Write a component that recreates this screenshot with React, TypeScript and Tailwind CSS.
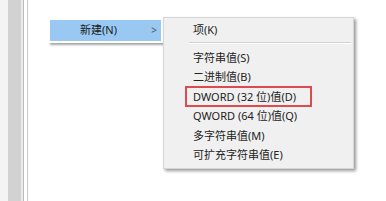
import React from "react";

const font = { fontFamily: '"Noto Sans", "Noto Sans CJK SC", sans-serif' };

const items = [
  { label: "字符串值(S)" },
  { label: "二进制值(B)" },
  { label: "DWORD (32 位)值(D)", boxed: true },
  { label: "QWORD (64 位)值(Q)" },
  { label: "多字符串值(M)" },
  { label: "可扩充字符串值(E)" },
];

export default function App() {
  return (
    <div className="flex h-[201px] w-[386px] overflow-hidden bg-white" style={font}>
      {/* Left tree-pane edge */}
      <div className="w-[8px] bg-[#f4f4f4]" />
      <div className="w-[13px] bg-[#d2d2d2]" />
      <div className="w-[2px] bg-[#ececec]" />
      <div className="w-[1px] bg-[#bdbdbd]" />
      <div className="w-[3px] bg-white" />
      <div className="w-[1px] bg-[#c8c8c8]" />

      <div className="relative flex-1 bg-white">
        {/* Parent menu */}
        <div className="absolute left-[20px] top-[18px] w-[115px] bg-white p-[2px] shadow-[2px_2px_2px_rgba(0,0,0,0.35)]">
          <div className="flex h-[21px] items-center justify-between bg-[#99c9f2] pl-[30px] pr-[4px] text-[11px] text-[#1a1a1a]">
            <span>新建(N)</span>
            <span className="text-[10px] text-[#555]">&gt;</span>
          </div>
        </div>

        {/* Submenu */}
        <div className="absolute left-[135px] top-[17px] w-[191px] border border-[#d6d6d6] bg-[#f0f0f0] pb-[3px] pt-[2px] shadow-[2px_2px_3px_rgba(0,0,0,0.4)]">
          <div className="flex h-[21px] items-center pl-[29px] text-[11px] text-[#222]">项(K)</div>
          <div className="mb-[5px] ml-[25px] mr-[2px] mt-[1px] h-[1px] bg-[#d2d2d2] shadow-[0_1px_0_#ffffff]" />
          <div className="flex flex-col">
            {items.map((it) => (
              <div key={it.label} className="flex h-[19.5px] items-center pl-[21px]">
                <span
                  className={
                    it.boxed
                      ? "flex h-[21px] w-[127px] items-center border-2 border-[#dd4a4f] pl-[6px] text-[11px] text-[#222]"
                      : "pl-[8px] text-[11px] text-[#222]"
                  }
                >
                  {it.label}
                </span>
              </div>
            ))}
          </div>
        </div>
      </div>
    </div>
  );
}
